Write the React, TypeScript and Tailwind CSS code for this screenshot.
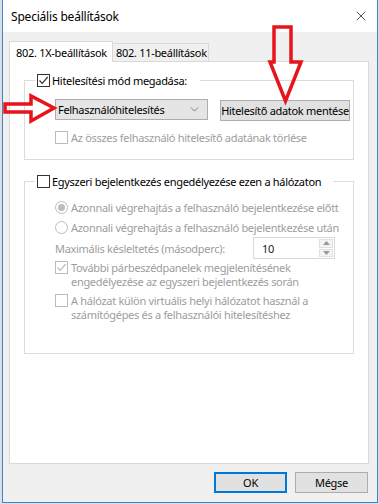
import { X, ChevronDown } from 'lucide-react';

const font = { fontFamily: '"Segoe UI", "Noto Sans", sans-serif' };

function Check({ checked, disabled }: { checked?: boolean; disabled?: boolean }) {
    const c = disabled ? '#bcbcbc' : '#333333';
    return (
        <span className={`w-[13px] h-[13px] shrink-0 bg-white border flex items-center justify-center ${disabled ? 'border-[#bcbcbc]' : 'border-[#333333]'}`}>
            {checked && (
                <svg width="11" height="11" viewBox="0 0 11 11">
                    <path d="M1.5 5.5 L4.2 8.3 L9.7 2" fill="none" stroke={c} strokeWidth="1.2" />
                </svg>
            )}
        </span>
    );
}

function Radio({ selected }: { selected?: boolean }) {
    return (
        <span className="w-[13px] h-[13px] shrink-0 rounded-full border border-[#bcbcbc] bg-white flex items-center justify-center">
            {selected && <span className="w-[7px] h-[7px] rounded-full bg-[#bcbcbc]" />}
        </span>
    );
}

export default function App() {
    return (
        <div className="relative w-[379px] h-[504px] bg-[#d9dfe5] pl-[2px] text-[11px] leading-[15px] tracking-[-0.3px] text-black whitespace-nowrap overflow-hidden" style={font}>
            <div className="w-[376px] h-[503px] border-x border-b border-[#3f86c6] flex flex-col">
                {/* title bar */}
                <div className="h-[32px] bg-white flex items-center justify-between pl-[8px] pr-[8px] shrink-0">
                    <span className="text-[12px] tracking-[-0.2px]">Speciális beállítások</span>
                    <X size={16} strokeWidth={1.1} className="text-[#111]" />
                </div>

                <div className="flex-1 bg-[#f0f0f0] pl-[6px] pt-[8px]">
                    {/* tabs */}
                    <div className="flex items-end h-[21px]">
                        <div className="w-[104px] h-[21px] bg-white border border-b-0 border-[#d9d9d9] pl-[6px] pt-[3px] relative z-10 -mb-px">
                            802. 1X-beállítások
                        </div>
                        <div className="w-[96px] h-[18px] bg-[#f0f0f0] border border-l-0 border-b-0 border-[#d9d9d9] pl-[3px] pt-px">
                            802. 11-beállítások
                        </div>
                    </div>

                    {/* panel */}
                    <div className="w-[360px] h-[403px] bg-white border border-[#d9d9d9] pl-[14px] pt-[18px]">
                        {/* group 1 */}
                        <div className="w-[330px] border border-[#dcdcdc] pb-[12px]">
                            <div className="-mt-[8px] ml-[10px] w-fit bg-white pl-[2px] pr-[13px] flex items-center gap-[2px] h-[15px]">
                                <Check checked />
                                <span>Hitelesítési mód megadása:</span>
                            </div>
                            <div className="mt-[11px] pl-[30px] flex gap-[12px]">
                                <div className="w-[153px] h-[21px] bg-[#e5e5e5] border border-[#adadad] flex items-center justify-between pl-[2px] pr-[6px]">
                                    <span>Felhasználóhitelesítés</span>
                                    <ChevronDown size={13} strokeWidth={1.2} className="text-[#444]" />
                                </div>
                                <div className="w-[130px] h-[21px] mt-px bg-[#e1e1e1] border border-[#adadad] flex items-center justify-center">
                                    Hitelesítő adatok mentése
                                </div>
                            </div>
                            <div className="mt-[6px] pl-[30px] h-[20px] flex items-center gap-[3px] text-[#9d9d9d]">
                                <Check disabled />
                                <span>Az összes felhasználó hitelesítő adatának törlése</span>
                            </div>
                        </div>

                        {/* group 2 */}
                        <div className="mt-[21px] w-[330px] border border-[#dcdcdc] pb-[31px]">
                            <div className="-mt-[8px] ml-[10px] w-fit bg-white pl-[2px] pr-[12px] flex items-center gap-[2px] h-[15px]">
                                <Check />
                                <span>Egyszeri bejelentkezés engedélyezése ezen a hálózaton</span>
                            </div>
                            <div className="mt-[8px] pl-[30px] text-[#9d9d9d]">
                                <div className="h-[20px] flex items-center gap-[3px]">
                                    <Radio selected />
                                    <span>Azonnali végrehajtás a felhasználó bejelentkezése előtt</span>
                                </div>
                                <div className="h-[20px] flex items-center gap-[3px]">
                                    <Radio />
                                    <span>Azonnali végrehajtás a felhasználó bejelentkezése után</span>
                                </div>
                                <div className="h-[22px] flex items-center justify-between pr-[18px]">
                                    <span>Maximális késleltetés (másodperc):</span>
                                    <div className="w-[82px] h-[22px] border border-[#d9d9d9] bg-white flex items-center justify-between pl-[8px] pr-px text-[#222]">
                                        <span>10</span>
                                        <div className="w-[14px] h-[18px] flex flex-col gap-px">
                                            <div className="flex-1 bg-[#f4f4f4] border border-[#e0e0e0] flex items-center justify-center">
                                                <svg width="7" height="4" viewBox="0 0 7 4"><path d="M0 4 L3.5 0 L7 4 Z" fill="#9a9a9a" /></svg>
                                            </div>
                                            <div className="flex-1 bg-[#f4f4f4] border border-[#e0e0e0] flex items-center justify-center">
                                                <svg width="7" height="4" viewBox="0 0 7 4"><path d="M0 0 L3.5 4 L7 0 Z" fill="#9a9a9a" /></svg>
                                            </div>
                                        </div>
                                    </div>
                                </div>
                                <div className="mt-[2px] flex gap-[3px] leading-[14px]">
                                    <Check checked disabled />
                                    <span>További párbeszédpanelek megjelenítésének<br />engedélyezése az egyszeri bejelentkezés során</span>
                                </div>
                                <div className="mt-[5px] flex gap-[3px] leading-[14px]">
                                    <Check disabled />
                                    <span>A hálózat külön virtuális helyi hálózatot használ a<br />számítógépes és a felhasználói hitelesítéshez</span>
                                </div>
                            </div>
                        </div>
                    </div>

                    {/* buttons */}
                    <div className="w-[360px] mt-[8px] flex justify-end gap-[8px] pr-px">
                        <div className="w-[73px] h-[21px] bg-[#e1e1e1] border-2 border-[#0078d7] flex items-center justify-center">OK</div>
                        <div className="w-[73px] h-[21px] bg-[#e1e1e1] border border-[#adadad] flex items-center justify-center">Mégse</div>
                    </div>
                </div>
            </div>

            {/* red annotation arrows */}
            <svg className="absolute left-0 top-0 pointer-events-none" width="379" height="504">
                <polygon points="274,27 291,27 291,62 301,62 285.5,101 270,62 274,62" fill="none" stroke="#e8141c" strokeWidth="3.5" strokeLinejoin="miter" />
                <polygon points="5,104 31,104 31,96 54,108 31,121 31,112 5,112" fill="none" stroke="#e8141c" strokeWidth="3.5" strokeLinejoin="miter" />
            </svg>
        </div>
    );
}
